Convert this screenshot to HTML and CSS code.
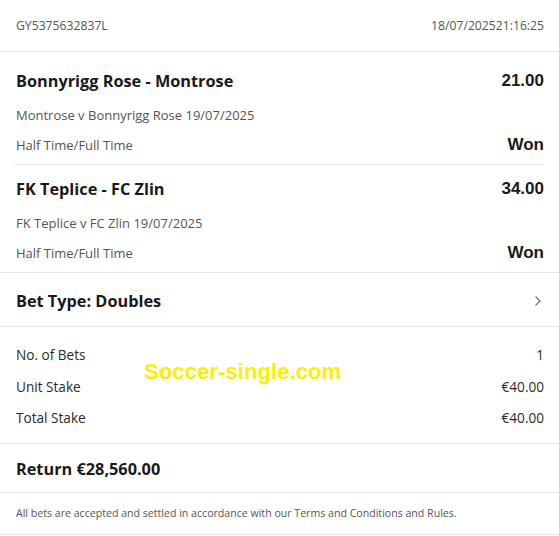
FILE: index.html
```html
<!DOCTYPE html>
<html>
<head>
<meta charset="utf-8">
<link rel="stylesheet" href="styles.css">
</head>
<body>
<div class="page">
  <div class="header">
    <span>GY5375632837L</span>
    <span>18/07/202521:16:25</span>
  </div>
  <div class="matches">
    <div class="match">
      <div class="row title"><span>Bonnyrigg Rose - Montrose</span><span class="num">21.00</span></div>
      <div class="row sub"><span>Montrose v Bonnyrigg Rose 19/07/2025</span></div>
      <div class="row market"><span>Half Time/Full Time</span><span class="num">Won</span></div>
    </div>
    <div class="match last">
      <div class="row title"><span>FK Teplice - FC Zlin</span><span class="num">34.00</span></div>
      <div class="row sub"><span>FK Teplice v FC Zlin 19/07/2025</span></div>
      <div class="row market"><span>Half Time/Full Time</span><span class="num">Won</span></div>
    </div>
  </div>
  <div class="bettype">
    <span>Bet Type: Doubles</span>
    <svg class="chev" width="8" height="12" viewBox="0 0 8 12"><path d="M1.5 1.5 L6 6 L1.5 10.5" fill="none" stroke="#777" stroke-width="1.3"/></svg>
  </div>
  <div class="summary">
    <div class="srow"><span>No. of Bets</span><span>1</span></div>
    <div class="srow"><span>Unit Stake</span><span>€40.00</span></div>
    <div class="srow"><span>Total Stake</span><span>€40.00</span></div>
    <div class="watermark">Soccer-single.com</div>
  </div>
  <div class="return">Return €28,560.00</div>
  <div class="footer">All bets are accepted and settled in accordance with our Terms and Conditions and Rules.</div>
</div>
</body>
</html>
```
FILE: styles.css
```css
* { box-sizing: border-box; }
html, body { margin: 0; padding: 0; background: #fff; }
body { font-family: "Open Sans", "Noto Sans", sans-serif; color: #1f1f1f; }
.page { width: 559px; }
.header {
  height: 52px;
  border-bottom: 1px solid #e3e3e3;
  display: flex; justify-content: space-between; align-items: center;
  padding: 0 15px 1px 16px;
  font-size: 12.2px; color: #555;
}
.matches { padding-top: 5px; border-bottom: 1px solid #e3e3e3; }
.match {
  margin: 0 16px 0 15px;
  padding: 7px 0 6px 1px;
  border-bottom: 1px solid #e3e3e3;
}
.match.last { border-bottom: none; }
.row { display: flex; justify-content: space-between; align-items: center; }
.title { height: 34px; font-weight: 700; font-size: 16.3px; color: #1a1a1a; }
.sub { height: 34px; font-size: 13px; color: #555; }
.market { height: 26px; font-size: 13px; color: #555; }
.num { font-family: "Liberation Sans", Arial, sans-serif; font-weight: 700; font-size: 17px; color: #1a1a1a; margin-right: -1px; }
.bettype {
  height: 54px;
  border-bottom: 1px solid #e3e3e3;
  display: flex; justify-content: space-between; align-items: center;
  padding: 2px 17px 0 16px;
  font-weight: 700; font-size: 16.3px; color: #1a1a1a;
}
.summary {
  position: relative;
  padding: 12px 15px 9px 16px;
  border-bottom: 1px solid #e3e3e3;
  font-size: 13.6px; color: #2a2a2a;
}
.srow { height: 31.5px; display: flex; justify-content: space-between; align-items: center; }
.watermark {
  position: absolute; left: 144px; top: 32px;
  font-family: "Liberation Sans", Arial, sans-serif; font-weight: 700;
  font-size: 22.2px; color: #ffee00;
}
.return {
  height: 49px;
  border-bottom: 1px solid #e3e3e3;
  padding: 2px 16px 0;
  display: flex; align-items: center;
  font-weight: 700; font-size: 16.3px; color: #1a1a1a;
}
.footer {
  height: 42px;
  border-bottom: 1px solid #e3e3e3;
  padding: 0 16px;
  display: flex; align-items: center;
  font-size: 10.6px; color: #555;
}
```
